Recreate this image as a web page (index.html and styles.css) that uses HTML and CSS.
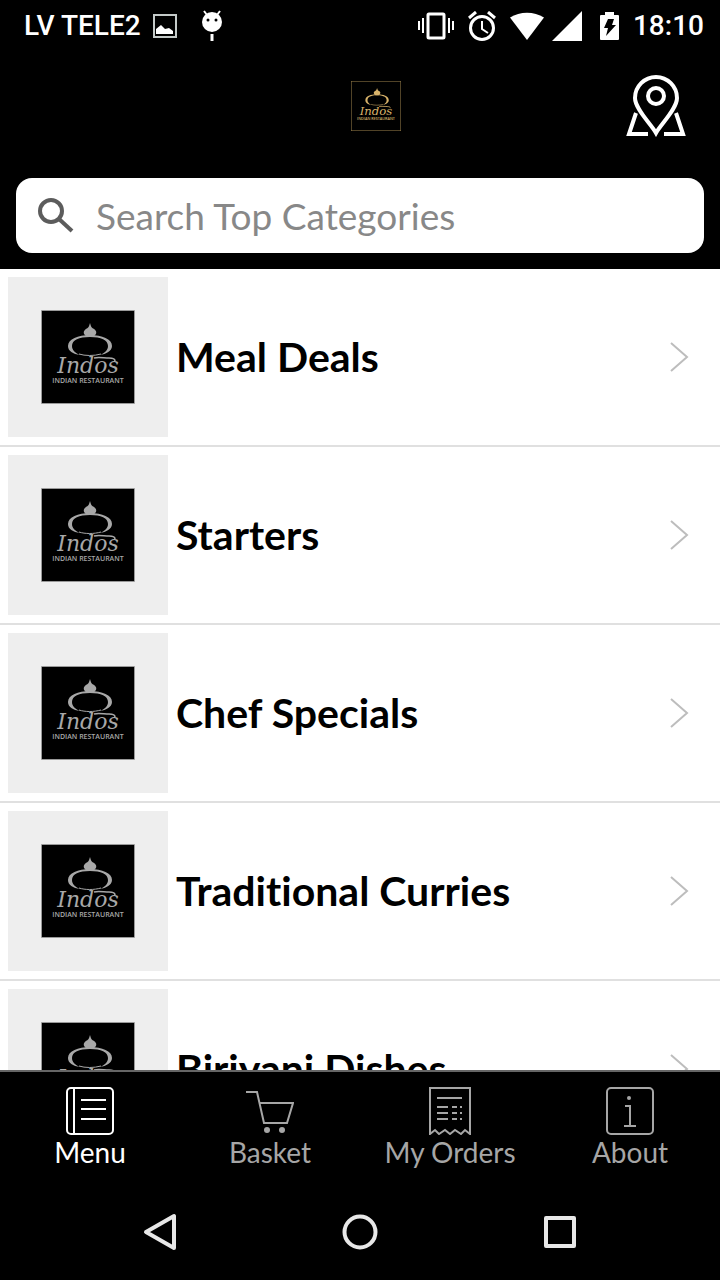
FILE: index.html
```html
<!DOCTYPE html>
<html lang="en">
<head>
  <meta charset="UTF-8">
  <meta name="viewport" content="width=device-width, initial-scale=1.0">
  <title>Indos Indian Restaurant</title>
  <link rel="stylesheet" href="styles.css">
</head>
<body>
  <!-- shared symbols -->
  <svg class="symbols" aria-hidden="true">
    <symbol id="logo" viewBox="0 0 94 94">
      <rect class="logo-frame" x="0.5" y="0.5" width="93" height="93"/>
      <path fill="currentColor" d="M49 13c1 4 2 5 4 6 3 2 3 5 0 7l-1 1h-6l-1-1c-3-2-3-5 0-7 2-1 3-2 4-6z"/>
      <path fill="currentColor" fill-rule="evenodd" d="M49 25C61 25 71 29 71 36c0 5-6 8-12 9 5-2 8-5 8-9 0-6-7-9-18-9s-18 3-18 9c0 4 3 7 8 9-7-1-12-4-12-9 0-7 10-11 22-11z"/>
      <path fill="none" stroke="currentColor" d="M38 44c6 2 15 2 22 0"/>
      <path fill="none" stroke="currentColor" stroke-width="1.500" d="M53 48c4-1 10 0 15 0 4 0 6 1 6 3"/>
      <text class="logo-name" x="47" y="63" text-anchor="middle">Indos</text>
      <text class="logo-sub" x="47" y="73" text-anchor="middle">INDIAN RESTAURANT</text>
    </symbol>
    <symbol id="chevron" viewBox="0 0 20 32">
      <path fill="none" stroke="#bdbdbd" stroke-width="2" d="M1 2l16 14L1 30"/>
    </symbol>
  </svg>

  <div class="status-bar">
    <span>LV TELE2</span>
    <svg width="24" height="24" viewBox="0 0 24 24">
      <rect x="1" y="1" width="22" height="22" fill="none" stroke="#c4cac8" stroke-width="2"/>
      <path fill="#fff" d="M3 20v-5l5-4 4 4 4-1 4 3v3z"/>
    </svg>
    <svg class="debug-icon" width="22" height="32" viewBox="0 0 22 32">
      <path stroke="#fff" stroke-width="2" d="M3 1l3 4M19 1l-3 4"/>
      <ellipse cx="11" cy="12" rx="10" ry="10" fill="#fff"/>
      <circle cx="7" cy="10" r="1.500"/>
      <circle cx="15" cy="10" r="1.500"/>
      <path stroke="#fff" stroke-width="3" d="M11 24v7"/>
    </svg>
    <div class="status-right">
      <svg width="36" height="30" viewBox="0 0 36 30" fill="none" stroke="#fff">
        <rect x="10" y="3" width="16" height="24" rx="1" stroke-width="3"/>
        <path stroke-width="2" d="M1 10v9M5 7v15M31 7v15M35 10v9"/>
      </svg>
      <svg width="28" height="30" viewBox="0 0 28 30" fill="none" stroke="#fff">
        <circle cx="14" cy="17" r="11.500" stroke-width="3"/>
        <path stroke-width="2" d="M14 10v8l6 4"/>
        <path stroke-width="3" d="M1 7l7-6M27 7l-7-6"/>
      </svg>
      <svg width="34" height="30" viewBox="0 0 34 30"><path fill="#fff" d="M0 6.500C10 0 24 0 34 6.500L17 29z"/></svg>
      <svg class="signal" width="30" height="30" viewBox="0 0 30 30"><path fill="#fff" d="M30 0v30H0z"/></svg>
      <svg width="19" height="30" viewBox="0 0 19 30">
        <path fill="#fff" d="M5 1h9v3h4q1 0 1 1v23q0 1-1 1H1q-1 0-1-1V5q0-1 1-1h4z"/>
        <path d="M8 8h6l-2 6h4L6 25l2-8H4z"/>
      </svg>
      <span>18:10</span>
    </div>
  </div>

  <header class="header">
    <div class="header-top">
      <svg class="header-logo" role="img" aria-label="Indos Indian Restaurant"><use href="#logo"/></svg>
      <button class="location-btn" type="button" aria-label="Find us">
        <svg width="60" height="62" viewBox="0 0 60 62" fill="none" stroke="#fff" stroke-width="4">
          <path d="M30 58C25 49 9 34 9 23a21 21 0 0 1 42 0C51 34 35 49 30 58z"/>
          <circle cx="30" cy="21" r="8"/>
          <path d="M10 38L3 59h19M50 38l7 21H38"/>
        </svg>
      </button>
    </div>
    <label class="search">
      <svg width="36" height="36" viewBox="0 0 36 36" fill="none" stroke="#5c5c5c" aria-hidden="true">
        <circle cx="13" cy="13" r="11" stroke-width="4"/>
        <path stroke-width="4" d="M21 21l13 12"/>
      </svg>
      <input type="search" placeholder="Search Top Categories" aria-label="Search Top Categories">
    </label>
  </header>

  <main class="categories">
    <a class="category" href="#">
      <span class="thumb"><svg><use href="#logo"/></svg></span>
      <span class="category-name">Meal Deals</span>
      <svg class="chevron"><use href="#chevron"/></svg>
    </a>
    <a class="category" href="#">
      <span class="thumb"><svg><use href="#logo"/></svg></span>
      <span class="category-name">Starters</span>
      <svg class="chevron"><use href="#chevron"/></svg>
    </a>
    <a class="category" href="#">
      <span class="thumb"><svg><use href="#logo"/></svg></span>
      <span class="category-name">Chef Specials</span>
      <svg class="chevron"><use href="#chevron"/></svg>
    </a>
    <a class="category" href="#">
      <span class="thumb"><svg><use href="#logo"/></svg></span>
      <span class="category-name">Traditional Curries</span>
      <svg class="chevron"><use href="#chevron"/></svg>
    </a>
    <a class="category" href="#">
      <span class="thumb"><svg><use href="#logo"/></svg></span>
      <span class="category-name">Biriyani Dishes</span>
      <svg class="chevron"><use href="#chevron"/></svg>
    </a>
  </main>

  <nav class="tabs">
    <a class="tab active" href="#">
      <svg viewBox="0 0 48 48">
        <rect x="1" y="1" width="46" height="46" rx="4"/>
        <path d="M8 1v46M15 13h25M15 22h25M15 32h25"/>
      </svg>
      Menu
    </a>
    <a class="tab" href="#">
      <svg viewBox="0 0 48 48">
        <path d="M0 5h11l7 31h23l6-20H14"/>
        <circle class="solid" cx="21" cy="43" r="3"/>
        <circle class="solid" cx="36" cy="43" r="3"/>
      </svg>
      Basket
    </a>
    <a class="tab" href="#">
      <svg viewBox="0 0 48 48">
        <path d="M4 47V1h40v46l-5-4-4 4-6-4-5 4-5-4-6 4-4-4z"/>
        <path d="M11 11h25M11 20h11M26 20h5M34 20h2M11 26h11M26 26h5M34 26h2M11 32h11M26 32h5M34 32h2"/>
      </svg>
      My Orders
    </a>
    <a class="tab" href="#">
      <svg viewBox="0 0 48 48">
        <rect x="1" y="1" width="46" height="46" rx="4"/>
        <circle class="solid" cx="23" cy="11" r="2"/>
        <path d="M19 19h5v20M18 39h12"/>
      </svg>
      About
    </a>
  </nav>

  <div class="system-nav">
    <button type="button" aria-label="Back">
      <svg width="40" height="40" viewBox="0 0 40 40"><path d="M34 4v32L6 20z"/></svg>
    </button>
    <button type="button" aria-label="Home">
      <svg width="40" height="40" viewBox="0 0 40 40"><circle cx="20" cy="20" r="15.500"/></svg>
    </button>
    <button type="button" aria-label="Recent apps">
      <svg width="40" height="40" viewBox="0 0 40 40"><rect x="6" y="6" width="28" height="28"/></svg>
    </button>
  </div>
</body>
</html>
```
FILE: styles.css
```css
* {
  box-sizing: border-box;
}
body {
  display: flex;
  flex-direction: column;
  height: 100vh;
  margin: 0;
  background: #000;
  font-family: Lato, 'Open Sans', sans-serif;
  font-variant-ligatures: none;
}
svg {
  display: block;
  flex-shrink: 0;
}
a {
  color: inherit;
  text-decoration: none;
}
button {
  padding: 0;
  border: none;
  background: none;
  cursor: pointer;
}
.symbols {
  position: absolute;
  width: 0;
  height: 0;
}

/* android status bar */
.status-bar {
  display: flex;
  align-items: center;
  gap: 12px;
  height: 50px;
  padding: 2px 16px 0 24px;
  color: #fff;
  font: 500 28px/48px Roboto, sans-serif;
}
.debug-icon {
  margin-left: 12px;
}
.status-right {
  display: flex;
  align-items: center;
  gap: 14px;
  margin-left: auto;
}
.signal {
  margin: 0 4px 0 -6px;
}

/* header */
.header {
  padding-bottom: 16px;
}
.header-top {
  display: grid;
  grid-template-columns: 1fr auto 1fr;
  align-items: center;
  height: 128px;
  padding: 0 0 16px 32px;
}
.header-logo {
  grid-column: 2;
  width: 50px;
  height: 50px;
  color: #d9b36a;
}
.location-btn {
  justify-self: end;
  margin-right: 34px;
}
.search {
  display: flex;
  align-items: center;
  gap: 22px;
  height: 75px;
  margin: 0 16px;
  padding: 0 22px;
  border-radius: 16px;
  background: #fff;
}
.search input {
  flex: 1;
  min-width: 0;
  padding: 0;
  border: none;
  outline: none;
  background: none;
  font: 400 37px/48px Lato, sans-serif;
}
.search input::placeholder {
  color: #888;
  opacity: 1;
}

/* restaurant logo */
.logo-frame {
  fill: #000;
  stroke: currentColor;
  stroke-opacity: 0.7;
}
.logo-name {
  fill: currentColor;
  font: italic 22px 'DejaVu Serif', serif;
}
.logo-sub {
  fill: currentColor;
  font: 600 7px 'Open Sans', sans-serif;
}

/* category list */
.categories {
  flex: 1;
  min-height: 0;
  overflow: hidden;
  background: #fff;
}
.category {
  display: flex;
  align-items: center;
  gap: 8px;
  padding: 8px 30px 8px 8px;
  border-bottom: 2px solid #e0e0e0;
  color: #000;
}
.thumb {
  padding: 33px;
  background: #eee;
  color: #a8a8a8;
}
.thumb svg {
  width: 94px;
  height: 94px;
}
.category-name {
  flex: 1;
  font-size: 41px;
  font-weight: 700;
  line-height: 48px;
}
.chevron {
  width: 20px;
  height: 32px;
}

/* bottom tabs */
.tabs {
  display: grid;
  grid-template-columns: repeat(4, 1fr);
  height: 114px;
  padding-top: 15px;
  border-top: 2px solid #666;
}
.tab {
  display: flex;
  flex-direction: column;
  align-items: center;
  color: #a6a6a6;
  font-size: 28px;
  line-height: 34px;
}
.tab.active {
  color: #fff;
}
.tab svg {
  width: 48px;
  height: 48px;
  fill: none;
  stroke: currentColor;
  stroke-width: 2;
}
.tab .solid {
  fill: currentColor;
  stroke: none;
}

/* android navigation keys */
.system-nav {
  display: flex;
  justify-content: center;
  gap: 160px;
  height: 96px;
}
.system-nav svg {
  fill: none;
  stroke: #e8e8e8;
  stroke-width: 4;
  stroke-linejoin: round;
}
```
